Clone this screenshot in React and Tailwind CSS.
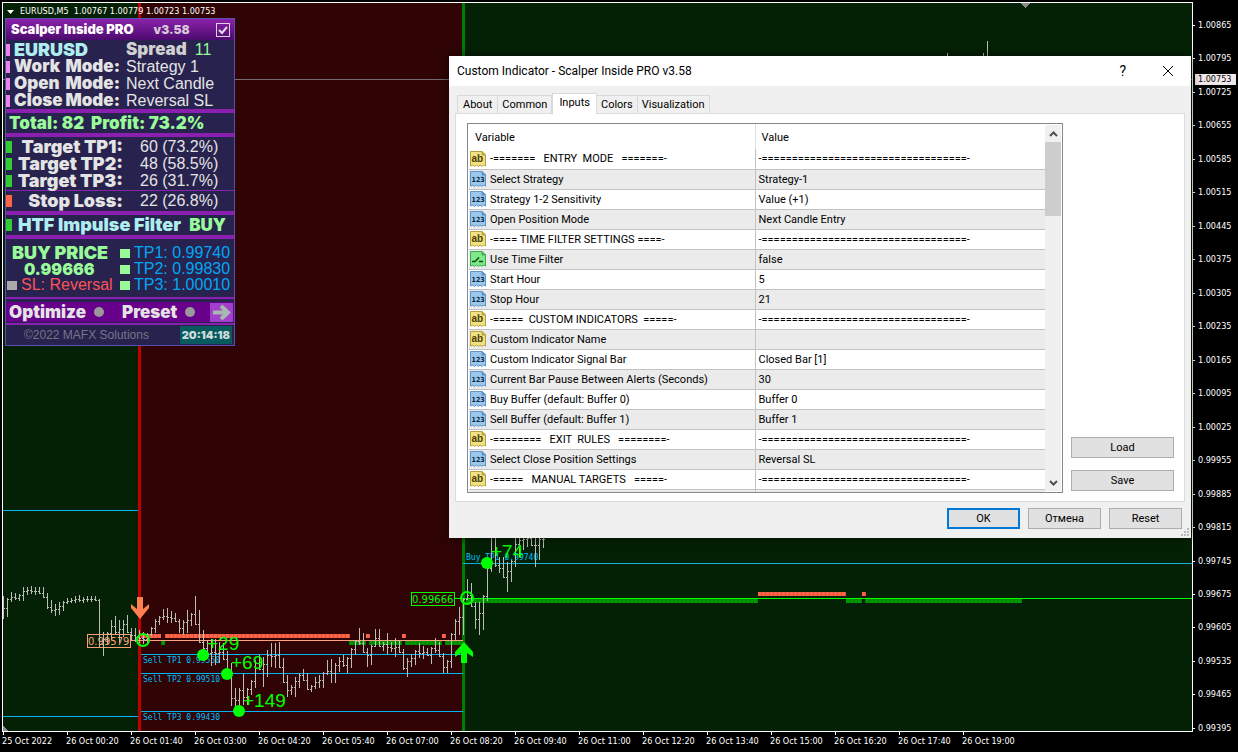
import {useState} from 'react';

const PRICES = [
    "1.00865", "1.00795", "1.00725", "1.00655", "1.00585", "1.00515", "1.00445", "1.00375",
    "1.00305", "1.00235", "1.00165", "1.00095", "1.00025", "0.99955", "0.99885", "0.99815",
    "0.99745", "0.99675", "0.99605", "0.99535", "0.99465", "0.99395",
];

const TIMES = [
    "25 Oct 2022", "26 Oct 00:20", "26 Oct 01:40", "26 Oct 03:00", "26 Oct 04:20", "26 Oct 05:40",
    "26 Oct 07:00", "26 Oct 08:20", "26 Oct 09:40", "26 Oct 11:00", "26 Oct 12:20", "26 Oct 13:40",
    "26 Oct 15:00", "26 Oct 16:20", "26 Oct 17:40", "26 Oct 19:00",
];

// [high, low] of every bar, one bar each 4px
const BARS = [
    [596, 619], [598, 617], [592, 602], [593, 600], [594, 601], [587, 601], [587, 595], [586, 594],
    [587, 595], [587, 594], [587, 598], [593, 609], [600, 613], [604, 616], [602, 615], [601, 611],
    [598, 604], [598, 603], [596, 603], [595, 602], [597, 603], [596, 602], [596, 602], [596, 601],
    [599, 648], [632, 656], [632, 645], [620, 640], [616, 635], [620, 643], [620, 637], [615, 633],
    [628, 641], [628, 642], [630, 643], [632, 644], [633, 644], [627, 636], [619, 633], [616, 625],
    [609, 620], [608, 623], [611, 623], [613, 622], [619, 633], [620, 635], [610, 633], [613, 626],
    [596, 625], [610, 643], [630, 655], [640, 655], [639, 666], [639, 665], [642, 663], [643, 660],
    [651, 672], [663, 706], [688, 707], [688, 711], [674, 705], [688, 705], [680, 695], [660, 688],
    [655, 670], [657, 687], [650, 677], [643, 667], [643, 668], [642, 668], [658, 683], [675, 697],
    [685, 695], [677, 697], [673, 688], [669, 681], [673, 690], [685, 692], [677, 689], [675, 688],
    [672, 688], [660, 675], [659, 683], [663, 683], [657, 672], [655, 667], [657, 673], [648, 668],
    [640, 655], [628, 645], [633, 653], [648, 667], [645, 665], [629, 647], [629, 647], [642, 651],
    [633, 654], [642, 652], [638, 657], [640, 653], [649, 670], [658, 677], [654, 667], [650, 665],
    [643, 658], [646, 659], [648, 656], [647, 664], [638, 653], [642, 657], [653, 673], [660, 673],
    [633, 668], [619, 640], [607, 635], [598, 635], [579, 600], [583, 607], [602, 629], [602, 635],
    [595, 630], [567, 601], [530, 572], [535, 567], [557, 573], [557, 578], [562, 592], [560, 582],
    [530, 567], [530, 557], [530, 550], [530, 547], [530, 546], [530, 567], [530, 560], [530, 548],
];

const ROWS = [
    ["ab", "-=======   ENTRY  MODE   =======-", "-==================================-"],
    ["123", "Select Strategy", "Strategy-1"],
    ["123", "Strategy 1-2 Sensitivity", "Value (+1)"],
    ["123", "Open Position Mode", "Next Candle Entry"],
    ["ab", "-==== TIME FILTER SETTINGS ====-", "-==================================-"],
    ["bool", "Use Time Filter", "false"],
    ["123", "Start Hour", "5"],
    ["123", "Stop Hour", "21"],
    ["ab", "-=====  CUSTOM INDICATORS  =====-", "-==================================-"],
    ["ab", "Custom Indicator Name", ""],
    ["123", "Custom Indicator Signal Bar", "Closed Bar [1]"],
    ["123", "Current Bar Pause Between Alerts (Seconds)", "30"],
    ["123", "Buy Buffer (default: Buffer 0)", "Buffer 0"],
    ["123", "Sell Buffer (default: Buffer 1)", "Buffer 1"],
    ["ab", "-========   EXIT  RULES   ========-", "-==================================-"],
    ["123", "Select Close Position Settings", "Reversal SL"],
    ["ab", "-=====   MANUAL TARGETS   =====-", "-==================================-"],
];

const TABS = ["About", "Common", "Inputs", "Colors", "Visualization"];

const clamp = (v, [hi, lo]) => Math.max(hi + 1, Math.min(lo - 1, v));
const middle = ([hi, lo]) => Math.round((hi + lo) / 2);

const barsPath = () => {
    let open = 606;
    return BARS.map((bar, i) => {
        const x = 3 + i * 4;
        const close = clamp(middle(BARS[i + 1] || bar), bar);
        const d = `M${x} ${bar[0]}h1V${bar[1]}h-1zM${x - 1} ${clamp(open, bar)}h1v1h-1zM${x + 1} ${close}h1v1h-1z`;
        open = close;
        return d;
    }).join("");
};

const Band = ({x, y, width, fill}) => (
    <>
        <rect x={x} y={y} width={width} height="4" fill={fill}/>
        <rect x={x} y={y} width={width} height="4" fill="url(#cells)"/>
    </>
);

const Chart = () => (
    <svg className="absolute inset-0 h-full w-full" shapeRendering="crispEdges" aria-hidden="true">
        <defs>
            <pattern id="cells" width="4" height="4" patternUnits="userSpaceOnUse">
                <rect x="1" width="1" height="4" fill="#000" opacity="0.15"/>
            </pattern>
        </defs>
        <g transform="translate(-3 -3)">
            <rect x="3" y="3" width="100%" height="100%" fill="#052105"/>
            <rect x="139" y="3" width="325" height="100%" fill="#300404"/>
            <rect x="3" y="79" width="100%" height="1" fill="#75696d"/>
            <rect x="138" y="3" width="3" height="100%" fill="#c00000"/>
            <rect x="462" y="3" width="3" height="100%" fill="#007d00"/>
            <path d="M3 510h135v1H3zM3 716h135v1H3zM141 654h322v1H141zM141 673h322v1H141zM141 711h322v1H141z" fill="#00b4f5"/>
            <rect x="463" y="563" width="100%" height="1" fill="#12b0dc"/>

            <Band x={141} y={634} width={20} fill="#ff6347"/>
            <Band x={165} y={634} width={185} fill="#ff6347"/>
            <Band x={366} y={634} width={4} fill="#ff6347"/>
            <Band x={402} y={634} width={4} fill="#ff6347"/>
            <Band x={442} y={634} width={4} fill="#ff6347"/>
            <Band x={161} y={641} width={4} fill="#009600"/>
            <Band x={349} y={641} width={17} fill="#009600"/>
            <Band x={369} y={641} width={33} fill="#009600"/>
            <Band x={405} y={641} width={37} fill="#009600"/>
            <Band x={445} y={641} width={18} fill="#009600"/>
            <Band x={466} y={599} width={292} fill="#009600"/>
            <Band x={846} y={599} width={16} fill="#009600"/>
            <Band x={865} y={599} width={157} fill="#009600"/>
            <Band x={758} y={592} width={88} fill="#ff6347"/>
            <Band x={862} y={592} width={4} fill="#ff6347"/>
            <rect x="130" y="640" width="333" height="1" fill="#ffa07a"/>
            <rect x="454" y="598" width="100%" height="1" fill="#00ff00"/>

            <g fill="#00bfff" fontFamily="'DejaVu Sans Mono', monospace" fontSize="8">
                <text x="143" y="663">Sell TP1 0.99550</text>
                <text x="143" y="682">Sell TP2 0.99510</text>
                <text x="143" y="720">Sell TP3 0.99430</text>
                <text x="466" y="560">Buy TP1 0.99740</text>
            </g>
            <path d={barsPath()} fill="#bdbdb8"/>
            <path d="M987 41h1v20h-1zM983 53h1v8h-1zM947 53h1v8h-1z" fill="#bdbdb8"/>
            <path d="M1020 3h10l-5 5z" fill="#8c8c8c"/>
            <path d="M3 726l5 5H3z" fill="#8c8c8c"/>

            <g fontFamily="'DejaVu Sans', sans-serif" fontSize="10">
                <rect x="87" y="634" width="43" height="13" fill="none" stroke="#ffa07a"/>
                <text x="88" y="645" fill="#ffa07a">0.99579</text>
                <rect x="411" y="592" width="43" height="13" fill="#300404" stroke="#00ff00"/>
                <text x="412" y="603" fill="#00ff00">0.99666</text>
            </g>
            <g shapeRendering="auto">
                <path d="M137 597h6v12l6-5v4l-9 11-9-11v-4l6 5z" fill="#ff7f50"/>
                <path d="M464 642l9 10v5l-6-4v10h-6v-10l-6 4v-5z" fill="#00ff00"/>
                <g fill="#00ff00">
                    <circle cx="203" cy="655" r="6"/>
                    <circle cx="227" cy="674" r="6"/>
                    <circle cx="239" cy="711" r="6"/>
                    <circle cx="487" cy="563" r="6"/>
                </g>
                <g fill="none" stroke="#00ff00" strokeWidth="2">
                    <circle cx="143" cy="640" r="6"/>
                    <circle cx="467" cy="598" r="6"/>
                </g>
            </g>
            <g fill="#00ff00" fontFamily="'Liberation Sans', Arial, sans-serif" fontSize="19">
                <text x="207" y="650">+29</text>
                <text x="231" y="669">+69</text>
                <text x="243" y="707">+149</text>
                <text x="491" y="558">+74</text>
            </g>
        </g>
    </svg>
);

const Rule = () => <div className="h-1 bg-[#8a1fb0]"/>;

const ModeRow = ({label, value}) => (
    <div className="flex h-[17px] items-center">
        <span className="h-3 w-1 bg-[#ee82ee]"/>
        <span className="ml-1 flex w-[106px] justify-between font-['Inter'] text-[17px] font-black">
            <span>{label}</span>
            <span>Mode:</span>
        </span>
        <span className="ml-1.5">{value}</span>
    </div>
);

const TargetRow = ({label, value, marker}) => (
    <div className="flex h-[17px] items-center">
        <span className={`${marker} h-3 w-1.5`}/>
        <span className="w-[111px] text-right font-['Inter'] text-[18px] font-black">{label}</span>
        <span className="ml-[17px]">{value}</span>
    </div>
);

const PriceRow = ({left, label}) => (
    <div className="flex h-4 items-center">
        <div className="flex w-[114px] items-center">{left}</div>
        <span className="h-[9px] w-[10px] bg-[#98fb98]"/>
        <span className="ml-1 text-[#00a8f3]">{label}</span>
    </div>
);

const ScalperPanel = () => {
    const [visible, setVisible] = useState(true);

    return (
        <section className="absolute top-[18px] left-[5px] w-[230px] border border-[#5a4fb0] bg-[#28224e] font-['Liberation_Sans',Arial,sans-serif] text-base leading-none whitespace-pre text-[#e4e4e4]">
            <label className="flex h-[21px] items-center bg-linear-to-b from-[#8c22ac] to-[#4c0a6e] pr-1 pl-[5px] font-['Inter'] text-[13px] font-black text-white">
                <span>Scalper Inside PRO</span>
                <span className="ml-5 flex-1 text-xs text-[#d8c8dc]">v3.58</span>
                <span className="relative size-3.5">
                    <input
                        type="checkbox"
                        checked={visible}
                        onChange={(e) => setVisible(e.target.checked)}
                        className="peer block size-3.5 appearance-none border border-[#dcd0e0]"
                    />
                    <svg className="pointer-events-none absolute inset-0 hidden size-3.5 peer-checked:block" viewBox="0 0 14 14" fill="none" stroke="#e8dcec" strokeWidth="2">
                        <path d="M3 7l3 3 5-6"/>
                    </svg>
                </span>
            </label>
            <div className="pt-px">
                <div className="flex h-[17px] items-center font-['Inter'] text-[18px] font-black">
                    <span className="h-3 w-1 bg-[#ee82ee]"/>
                    <span className="ml-1 w-[112px] text-[#afeeee]">EURUSD</span>
                    <span className="text-[17px] text-[#d0d0d0]">Spread</span>
                    <span className="ml-2 font-['Liberation_Sans'] text-base font-normal text-[#98fb98]">11</span>
                </div>
                <ModeRow label="Work" value="Strategy 1"/>
                <ModeRow label="Open" value="Next Candle"/>
                <ModeRow label="Close" value="Reversal SL"/>
            </div>
            <Rule/>
            <div className="flex h-5 items-center pl-[3px] font-['Inter'] text-[17px] font-black text-[#98fb98]">Total: 82  Profit: 73.2%</div>
            <Rule/>
            <div className="border-b border-[#8a1fb0] py-px">
                <TargetRow label="Target TP1:" value="60 (73.2%)" marker="bg-[#32cd32]"/>
                <TargetRow label="Target TP2:" value="48 (58.5%)" marker="bg-[#32cd32]"/>
                <TargetRow label="Target TP3:" value="26 (31.7%)" marker="bg-[#32cd32]"/>
            </div>
            <div className="flex h-5 flex-col justify-center">
                <TargetRow label="Stop Loss:" value="22 (26.8%)" marker="bg-[#ff6347]"/>
            </div>
            <Rule/>
            <div className="flex h-5 items-center font-['Inter'] text-[18px] font-black text-[#afeeee]">
                <span className="mr-1.5 h-3 w-1.5 bg-[#32cd32]"/>
                HTF Impulse Filter
                <span className="mr-2 ml-auto text-[17px] text-[#98fb98]">BUY</span>
            </div>
            <Rule/>
            <div className="pt-1.5 pb-1">
                <PriceRow label="TP1: 0.99740" left={<span className="ml-1.5 font-['Inter'] text-[18px] font-black text-[#98fb98]">BUY PRICE</span>}/>
                <PriceRow label="TP2: 0.99830" left={<span className="ml-[18px] font-['Inter'] font-black text-[#98fb98]">0.99666</span>}/>
                <PriceRow
                    label="TP3: 1.00010"
                    left={
                        <>
                            <span className="mr-1 ml-px h-[9px] w-[10px] bg-[#a9a9a9]"/>
                            <span className="text-[#fa5555]">SL: Reversal</span>
                        </>
                    }
                />
            </div>
            <div className="h-0.5 bg-[#8a1fb0]"/>
            <div className="mt-[3px] mb-px flex h-5 items-center bg-[#68008c] pl-[3px] font-['Inter'] text-[17px] font-black">
                <button className="flex items-center gap-2">
                    Optimize
                    <span className="size-2.5 rounded-full bg-[#999]"/>
                </button>
                <button className="ml-[18px] flex items-center gap-2">
                    Preset
                    <span className="size-2.5 rounded-full bg-[#999]"/>
                </button>
                <button className="mr-px ml-auto h-[19px] w-[23px] bg-[#a040cc]" aria-label="Next">
                    <svg className="block h-[19px] w-[23px]" viewBox="0 0 23 19" fill="none" stroke="#a9b8b0" strokeWidth="4">
                        <path d="M3 9.5h14M11 3l7 6.500-7 6.500"/>
                    </svg>
                </button>
            </div>
            <div className="h-0.5 bg-[#8a1fb0]"/>
            <div className="flex h-5 items-center justify-between pr-0.5 pl-[18px] text-xs text-[#75758a]">
                ©2022 MAFX Solutions
                <span className="bg-[#085a5e] px-0.5 py-0.5 font-['Inter'] text-[11px] font-black text-[#cfdcdc]">20:14:18</span>
            </div>
        </section>
    );
};

const TYPE_ICON = {
    ab: {fill: "#f0e184", edge: "#b3a23f", fold: "#cdb94a", label: "String"},
    123: {fill: "#9ac8ef", edge: "#5f93c4", fold: "#5b97cf", label: "Number"},
    bool: {fill: "#7ee88a", edge: "#3fa850", fold: "#4fc45e", label: "Boolean"},
};

const TypeIcon = ({type}) => {
    const {fill, edge, fold, label} = TYPE_ICON[type];
    return (
        <svg className="size-4 shrink-0" viewBox="0 0 16 16" role="img" aria-label={label}>
            <path d="M.5.5H12l3.500 3.500v11l-2-1-1.500 1.500-2-1.500-1.500 1.500-2-1.500-2 1.500-1.500-1.500-2.500 1z" fill={fill} stroke={edge}/>
            <path d="M12 .5V4h3.500z" fill={fold} stroke={edge}/>
            {type === "ab" && <text x="1.5" y="11" fontSize="10" fontWeight="bold" fontFamily="'Liberation Sans'" fill="#4a4008">ab</text>}
            {type === "123" && <text x="1.5" y="11" fontSize="7" fontWeight="bold" fontFamily="'DejaVu Sans Condensed'" fill="#10243c">123</text>}
            {type === "bool" && <path d="M2 10.500h3l4-4M9 10.500h4" fill="none" stroke="#0c4a18" strokeWidth="1.5"/>}
        </svg>
    );
};

const ScrollBar = () => (
    <div className="my-px mr-px flex w-4 flex-col justify-between bg-[#f0f0f0]">
        <div>
            <button className="flex h-[17px] w-4 items-center justify-center" aria-label="Scroll up">
                <svg width="9" height="6" viewBox="0 0 9 6" fill="none" stroke="#505050" strokeWidth="2"><path d="M1 5l3.500-3.500L8 5"/></svg>
            </button>
            <div className="h-[74px] bg-[#cdcdcd]"/>
        </div>
        <button className="flex h-[17px] w-4 items-center justify-center" aria-label="Scroll down">
            <svg width="9" height="6" viewBox="0 0 9 6" fill="none" stroke="#505050" strokeWidth="2"><path d="M1 1l3.500 3.500L8 1"/></svg>
        </button>
    </div>
);

const DialogBtn = ({children, className = "", ...props}) => (
    <button className={`${className} flex h-[21px] items-center justify-center bg-[#e1e1e1]`} {...props}>
        {children}
    </button>
);

const InputsDialog = () => {
    const [tab, setTab] = useState("Inputs");

    return (
        <div
            role="dialog"
            aria-labelledby="dialog-title"
            className="absolute top-14 right-[47px] left-[449px] bg-[#f0f0f0] font-['Roboto',Arial,sans-serif] text-[11px] leading-none text-black shadow-[0_0_10px_rgba(0,0,0,0.6)]"
        >
            <div className="flex h-[30px] items-center bg-white pr-[17px] pl-2 text-xs">
                <h1 id="dialog-title" className="flex-1">Custom Indicator - Scalper Inside PRO v3.58</h1>
                <button className="mr-9 text-sm" aria-label="Help">?</button>
                <button aria-label="Close">
                    <svg width="12" height="12" viewBox="0 0 12 12" stroke="#000" fill="none"><path d="M1 1l10 10M11 1L1 11"/></svg>
                </button>
            </div>
            <div className="px-1.5 pt-[7px]">
                <div role="tablist" className="flex items-end px-0.5">
                    {TABS.map((name) => (
                        <button
                            key={name}
                            role="tab"
                            aria-selected={tab === name}
                            onClick={() => setTab(name)}
                            className={`${tab === name ? "relative -mb-px h-[21px] border-x bg-white px-1.5 pb-1" : "h-[18px] border-r px-1 first:border-l first:px-[5px]"} border-t border-[#d9d9d9]`}
                        >
                            {name}
                        </button>
                    ))}
                </div>
                <div className="flex gap-2 border border-[#dcdcdc] bg-white pt-[9px] pr-2.5 pb-2 pl-[11px]">
                    <div className="flex h-[370px] flex-1 overflow-hidden border border-[#828790]">
                        <div className="flex-1 overflow-hidden pl-px">
                            <table className="w-full table-fixed border-collapse text-left whitespace-pre">
                                <thead>
                                <tr className="h-[25px]">
                                    <th className="w-[286px] border-r border-[#e0e0e0] pt-0.5 pl-1.5 font-normal">Variable</th>
                                    <th className="pt-0.5 pl-1.5 font-normal">Value</th>
                                </tr>
                                </thead>
                                <tbody>
                                {ROWS.map(([type, name, value]) => (
                                    <tr key={name} className="h-5 border-b border-[#c3c3c3] even:bg-[#ebebeb]">
                                        <td className="border-r border-[#c3c3c3] p-0">
                                            <span className="flex items-center gap-1 pl-px">
                                                <TypeIcon type={type}/>
                                                {name}
                                            </span>
                                        </td>
                                        <td className="p-0 pl-[3px]">{value}</td>
                                    </tr>
                                ))}
                                <tr className="h-5 bg-[#ebebeb]">
                                    <td className="border-r border-[#c3c3c3]"/>
                                    <td/>
                                </tr>
                                </tbody>
                            </table>
                        </div>
                        <ScrollBar/>
                    </div>
                    <div className="flex w-[103px] flex-col justify-end gap-3 pb-0.5">
                        <DialogBtn className="border border-[#adadad]">Load</DialogBtn>
                        <DialogBtn className="border border-[#adadad]">Save</DialogBtn>
                    </div>
                </div>
            </div>
            <div className="flex justify-end gap-2 pt-1.5 pr-[9px] pb-[9px]">
                <DialogBtn className="w-[73px] border-2 border-[#0078d7]">OK</DialogBtn>
                <DialogBtn className="w-[73px] border border-[#adadad]">Отмена</DialogBtn>
                <DialogBtn className="w-[73px] border border-[#adadad]">Reset</DialogBtn>
            </div>
            <svg className="absolute right-0.5 bottom-0.5" width="8" height="8" fill="#b8b8b8">
                <path d="M6 0h2v2H6zM3 3h2v2H3zM6 3h2v2H6zM0 6h2v2H0zM3 6h2v2H3zM6 6h2v2H6z"/>
            </svg>
        </div>
    );
};

const App = () => (
    <div className="relative grid min-h-screen grid-cols-[minmax(0,1fr)_45px] grid-rows-[minmax(0,1fr)_20px] overflow-hidden bg-black font-['DejaVu_Sans_Condensed','DejaVu_Sans',sans-serif] text-[9px] leading-none text-white">
        <div className="relative mt-0.5 ml-0.5 overflow-hidden border border-white">
            <Chart/>
            <div className="relative flex items-center gap-1.5 pt-1 pl-1 whitespace-pre">
                <svg width="7" height="4" fill="#fff"><path d="M0 0h7L3.500 4z"/></svg>
                EURUSD,M5  1.00767 1.00779 1.00723 1.00753
            </div>
        </div>
        <div className="relative row-span-2 flex flex-col justify-between pt-[21px] pb-[19px]">
            {PRICES.map((price) => (
                <div key={price} className="flex items-center gap-[3px]">
                    <span className="h-px w-0.5 bg-white"/>
                    {price}
                </div>
            ))}
            <div className="absolute top-[74px] left-0.5 w-[41px] bg-[#f0e8e8] py-px pl-[3px] text-black">1.00753</div>
        </div>
        <div className="flex overflow-hidden pl-0.5 whitespace-nowrap">
            {TIMES.map((time) => (
                <div key={time} className="w-16 shrink-0">
                    <span className="mb-0.5 ml-px block h-[3px] w-px bg-white"/>
                    {time}
                </div>
            ))}
        </div>
        <ScalperPanel/>
        <InputsDialog/>
    </div>
);

export default App;
